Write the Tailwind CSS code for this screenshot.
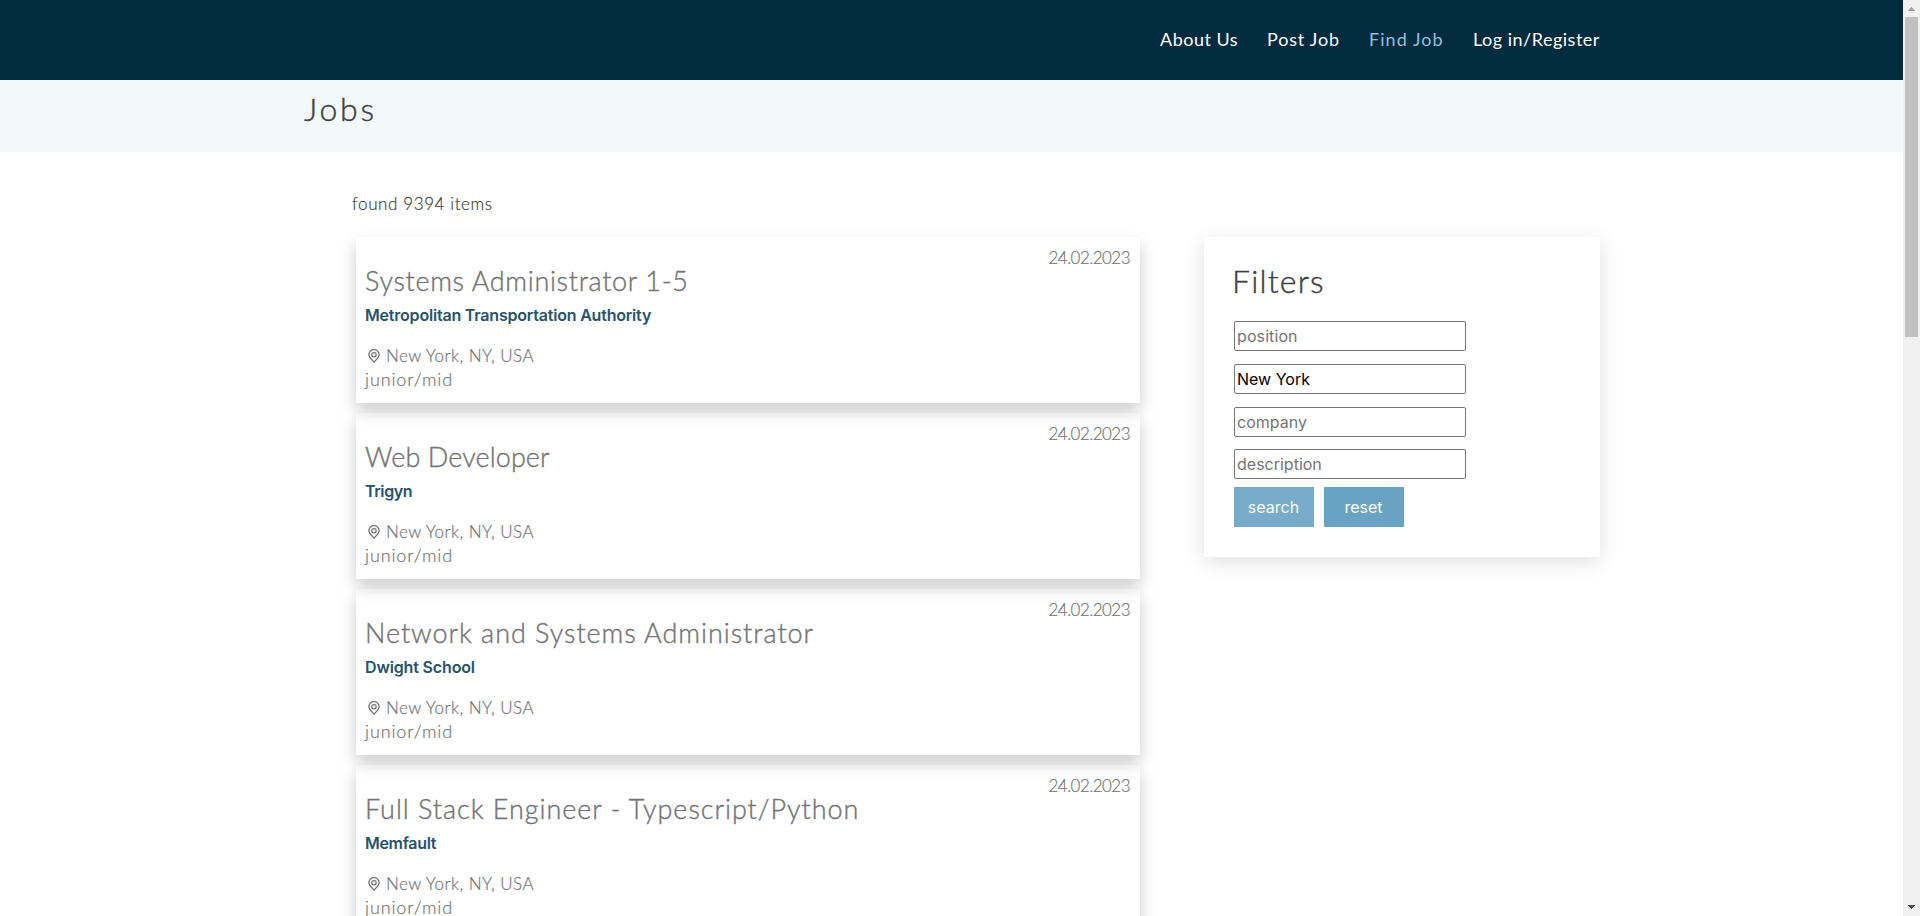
<!DOCTYPE html>
<html lang="en">
<head>
<meta charset="utf-8">
<title>Jobs</title>
<script src="https://cdn.jsdelivr.net/npm/@tailwindcss/browser@4"></script>
</head>
<body class="h-[916px] overflow-hidden flex bg-white font-['Lato','Open_Sans',sans-serif] text-[17px] leading-[25px] text-[#404040]">

<svg class="hidden">
  <symbol id="pin" viewBox="0 0 24 24" fill="none" stroke="currentColor" stroke-width="2.200">
    <path d="M12 22.500C8.200 18.300 3.200 14.600 3.200 9.800a8.800 8.800 0 0 1 17.600 0c0 4.800-5 8.500-8.800 12.700z"/>
    <circle cx="12" cy="9.800" r="3.600"/>
  </symbol>
</svg>

<div class="w-[1903px] h-full overflow-hidden">
  <header class="h-20 bg-[#032b3f] flex items-center justify-end pr-[303px] pb-px">
    <nav class="flex gap-[29px] text-white whitespace-nowrap text-[18px]">
      <a class="w-[78px] tracking-[0.5px]">About Us</a>
      <a class="w-[73px] tracking-[0.8px]">Post Job</a>
      <a class="w-[75px] tracking-[1.05px] text-[#8bc0e3]">Find Job</a>
      <a class="w-[127px] tracking-[0.5px]">Log in/Register</a>
    </nav>
  </header>
  <div class="h-[72px] bg-[#f3f8fb] pl-[304px] pt-[11px]">
    <h1 class="text-[32px] leading-[36px] font-light tracking-[2.8px] [-webkit-text-stroke:0.4px]">Jobs</h1>
  </div>

  <div class="pl-[352px] pt-[39px]">
    <p class="tracking-[0.6px] font-light [-webkit-text-stroke:0.2px]">found 9394 items</p>
  </div>

  <main class="flex items-start pl-[356px] pt-[21px] gap-16">
    <section class="w-[784px] flex flex-col gap-2.5 text-[#757575] font-light">

      <article class="h-[166px] flex justify-between pl-[9px] pr-2.5 shadow-[0_8px_16px_rgba(0,0,0,0.2)]">
        <div class="pt-7 whitespace-nowrap [-webkit-text-stroke:0.2px]">
          <h2 class="text-[27px] leading-8 tracking-[0.66px] [-webkit-text-stroke:0.4px]">Systems Administrator 1-5</h2>
          <p class="mt-1.5 font-['Inter',sans-serif] text-base leading-6 font-semibold tracking-[-0.2px] text-[#26536b] [-webkit-text-stroke:0px]">Metropolitan Transportation Authority</p>
          <p class="mt-4 h-6 flex items-center tracking-[0.44px]"><svg class="mt-px ml-0.5 mr-[5px] size-3.5"><use href="#pin"/></svg>New York, NY, USA</p>
          <p class="text-[18px] tracking-[0.88px]">junior/mid</p>
        </div>
        <time class="mt-2 tracking-[-0.53px] [-webkit-text-stroke:0.2px]">24.02.2023</time>
      </article>

      <article class="h-[166px] flex justify-between pl-[9px] pr-2.5 shadow-[0_8px_16px_rgba(0,0,0,0.2)]">
        <div class="pt-7 whitespace-nowrap [-webkit-text-stroke:0.2px]">
          <h2 class="text-[27px] leading-8 tracking-[0.1px] [-webkit-text-stroke:0.4px]">Web Developer</h2>
          <p class="mt-1.5 font-['Inter',sans-serif] text-base leading-6 font-semibold tracking-[-0.4px] text-[#26536b] [-webkit-text-stroke:0px]">Trigyn</p>
          <p class="mt-4 h-6 flex items-center tracking-[0.44px]"><svg class="mt-px ml-0.5 mr-[5px] size-3.5"><use href="#pin"/></svg>New York, NY, USA</p>
          <p class="text-[18px] tracking-[0.88px]">junior/mid</p>
        </div>
        <time class="mt-2 tracking-[-0.53px] [-webkit-text-stroke:0.2px]">24.02.2023</time>
      </article>

      <article class="h-[166px] flex justify-between pl-[9px] pr-2.5 shadow-[0_8px_16px_rgba(0,0,0,0.2)]">
        <div class="pt-7 whitespace-nowrap [-webkit-text-stroke:0.2px]">
          <h2 class="text-[27px] leading-8 tracking-[0.95px] [-webkit-text-stroke:0.4px]">Network and Systems Administrator</h2>
          <p class="mt-1.5 font-['Inter',sans-serif] text-base leading-6 font-semibold tracking-[-0.15px] text-[#26536b] [-webkit-text-stroke:0px]">Dwight School</p>
          <p class="mt-4 h-6 flex items-center tracking-[0.44px]"><svg class="mt-px ml-0.5 mr-[5px] size-3.5"><use href="#pin"/></svg>New York, NY, USA</p>
          <p class="text-[18px] tracking-[0.88px]">junior/mid</p>
        </div>
        <time class="mt-2 tracking-[-0.53px] [-webkit-text-stroke:0.2px]">24.02.2023</time>
      </article>

      <article class="h-[166px] flex justify-between pl-[9px] pr-2.5 shadow-[0_8px_16px_rgba(0,0,0,0.2)]">
        <div class="pt-7 whitespace-nowrap [-webkit-text-stroke:0.2px]">
          <h2 class="text-[27px] leading-8 tracking-[0.95px] [-webkit-text-stroke:0.4px]">Full Stack Engineer - Typescript/Python</h2>
          <p class="mt-1.5 font-['Inter',sans-serif] text-base leading-6 font-semibold tracking-[-0.3px] text-[#26536b] [-webkit-text-stroke:0px]">Memfault</p>
          <p class="mt-4 h-6 flex items-center tracking-[0.44px]"><svg class="mt-px ml-0.5 mr-[5px] size-3.5"><use href="#pin"/></svg>New York, NY, USA</p>
          <p class="text-[18px] tracking-[0.88px]">junior/mid</p>
        </div>
        <time class="mt-2 tracking-[-0.53px] [-webkit-text-stroke:0.2px]">24.02.2023</time>
      </article>
    </section>

    <aside class="w-[396px] h-80 pl-[30px] pt-6 shadow-[0_5px_20px_rgba(0,0,0,0.12)] font-['Inter',sans-serif] text-base">
      <h2 class="-ml-0.5 h-[60px] font-['Lato','Open_Sans',sans-serif] text-[32px] leading-[40px] font-light tracking-[1.2px] [-webkit-text-stroke:0.4px]">Filters</h2>
      <div class="flex flex-col gap-[13px]">
        <input class="w-[232px] h-[30px] border border-[#767676] rounded-[2px] px-0.5 text-black placeholder:text-[#757575] tracking-[0.1px]" placeholder="position">
        <input class="w-[232px] h-[30px] border border-[#767676] rounded-[2px] px-0.5 text-black placeholder:text-[#757575]" value="New York">
        <input class="w-[232px] h-[30px] border border-[#767676] rounded-[2px] px-0.5 text-black placeholder:text-[#757575]" placeholder="company">
        <input class="-mt-px w-[232px] h-[30px] border border-[#767676] rounded-[2px] px-0.5 text-black placeholder:text-[#757575]" placeholder="description">
      </div>
      <div class="mt-2 flex gap-2.5 text-white">
        <button class="w-20 h-10 pr-px bg-[#78aac9]">search</button>
        <button class="w-20 h-10 pr-px bg-[#69a3c3]">reset</button>
      </div>
    </aside>
  </main>
</div>

<!-- Scrollbar -->
<div class="w-[17px] h-full bg-[#f1f1f1] flex flex-col items-center justify-between">
  <div class="flex flex-col items-center pt-[7px]">
    <svg class="w-[7px] h-1" viewBox="0 0 7 4" fill="#a3a3a3" shape-rendering="crispEdges"><path d="M3 0h1v1h1v1h1v1h1v1H0V3h1V2h1V1h1z"/></svg>
    <div class="mt-1.5 w-[13px] h-80 bg-[#c1c1c1]"></div>
  </div>
  <svg class="mb-[7px] w-[7px] h-1" viewBox="0 0 7 4" fill="#505050" shape-rendering="crispEdges"><path d="M3 4h1V3h1V2h1V1h1V0H0v1h1v1h1v1h1z"/></svg>
</div>
</body>
</html>
